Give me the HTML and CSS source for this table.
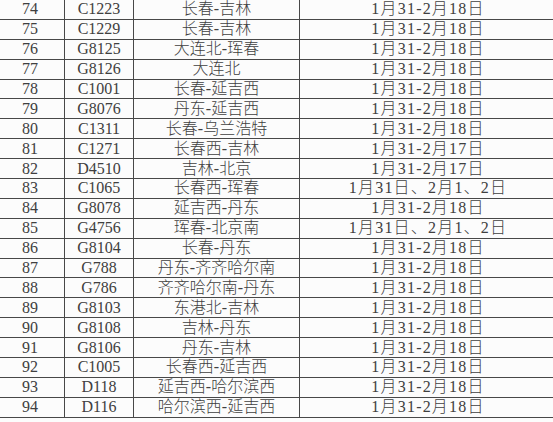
FILE: index.html
```html
<!DOCTYPE html>
<html lang="zh-CN">
<head>
<meta charset="utf-8">
<link rel="stylesheet" href="styles.css">
</head>
<body>
<div class="sheet">
  <div class="row"><div class="c n">74</div><div class="c t">C1223</div><div class="c r">长春-吉林</div><div class="c d">1月31-2月18日</div></div>
  <div class="row"><div class="c n">75</div><div class="c t">C1229</div><div class="c r">长春-吉林</div><div class="c d">1月31-2月18日</div></div>
  <div class="row"><div class="c n">76</div><div class="c t">G8125</div><div class="c r">大连北-珲春</div><div class="c d">1月31-2月18日</div></div>
  <div class="row"><div class="c n">77</div><div class="c t">G8126</div><div class="c r">大连北</div><div class="c d">1月31-2月18日</div></div>
  <div class="row"><div class="c n">78</div><div class="c t">C1001</div><div class="c r">长春-延吉西</div><div class="c d">1月31-2月18日</div></div>
  <div class="row"><div class="c n">79</div><div class="c t">G8076</div><div class="c r">丹东-延吉西</div><div class="c d">1月31-2月18日</div></div>
  <div class="row"><div class="c n">80</div><div class="c t">C1311</div><div class="c r">长春-乌兰浩特</div><div class="c d">1月31-2月18日</div></div>
  <div class="row"><div class="c n">81</div><div class="c t">C1271</div><div class="c r">长春西-吉林</div><div class="c d">1月31-2月17日</div></div>
  <div class="row"><div class="c n">82</div><div class="c t">D4510</div><div class="c r">吉林-北京</div><div class="c d">1月31-2月17日</div></div>
  <div class="row"><div class="c n">83</div><div class="c t">C1065</div><div class="c r">长春西-珲春</div><div class="c d">1月31日、2月1、2日</div></div>
  <div class="row"><div class="c n">84</div><div class="c t">G8078</div><div class="c r">延吉西-丹东</div><div class="c d">1月31-2月18日</div></div>
  <div class="row"><div class="c n">85</div><div class="c t">G4756</div><div class="c r">珲春-北京南</div><div class="c d">1月31日、2月1、2日</div></div>
  <div class="row"><div class="c n">86</div><div class="c t">G8104</div><div class="c r">长春-丹东</div><div class="c d">1月31-2月18日</div></div>
  <div class="row"><div class="c n">87</div><div class="c t">G788</div><div class="c r">丹东-齐齐哈尔南</div><div class="c d">1月31-2月18日</div></div>
  <div class="row"><div class="c n">88</div><div class="c t">G786</div><div class="c r">齐齐哈尔南-丹东</div><div class="c d">1月31-2月18日</div></div>
  <div class="row"><div class="c n">89</div><div class="c t">G8103</div><div class="c r">东港北-吉林</div><div class="c d">1月31-2月18日</div></div>
  <div class="row"><div class="c n">90</div><div class="c t">G8108</div><div class="c r">吉林-丹东</div><div class="c d">1月31-2月18日</div></div>
  <div class="row"><div class="c n">91</div><div class="c t">G8106</div><div class="c r">丹东-吉林</div><div class="c d">1月31-2月18日</div></div>
  <div class="row"><div class="c n">92</div><div class="c t">C1005</div><div class="c r">长春西-延吉西</div><div class="c d">1月31-2月18日</div></div>
  <div class="row"><div class="c n">93</div><div class="c t">D118</div><div class="c r">延吉西-哈尔滨西</div><div class="c d">1月31-2月18日</div></div>
  <div class="row"><div class="c n">94</div><div class="c t">D116</div><div class="c r">哈尔滨西-延吉西</div><div class="c d">1月31-2月18日</div></div>
</div>
</body>
</html>
```
FILE: styles.css
```css
html, body {
  margin: 0;
  padding: 0;
  background: #fcfcfc;
  overflow: hidden;
}
.sheet {
  margin-left: -4px;
  width: 560px;
  font-family: "Liberation Serif", "Noto Sans CJK SC", serif;
  font-size: 16px;
  color: #404040;
}
.row {
  display: grid;
  grid-template-columns: 69px 69px 166px 1fr;
  height: 19.9px;
  box-sizing: border-box;
  border-bottom: 1px solid #484848;
}
.c {
  display: flex;
  align-items: center;
  justify-content: center;
  line-height: 1;
  white-space: nowrap;
  box-sizing: border-box;
  border-right: 1px solid #484848;
  font-weight: 300;
}
.d {
  border-right: none;
  letter-spacing: 1.2px;
}
```
